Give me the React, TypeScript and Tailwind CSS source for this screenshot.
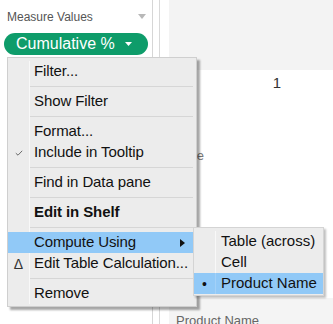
import React from 'react';
import clsx from 'clsx';

type Item = { label: string; icon?: 'check' | 'delta'; bold?: boolean; active?: boolean; sub?: boolean };

// groups are split by separators
const groups: Item[][] = [
  [{ label: 'Filter...' }],
  [{ label: 'Show Filter' }],
  [{ label: 'Format...' }, { label: 'Include in Tooltip', icon: 'check' }],
  [{ label: 'Find in Data pane' }],
  [{ label: 'Edit in Shelf', bold: true }],
  [{ label: 'Compute Using', active: true, sub: true }, { label: 'Edit Table Calculation...', icon: 'delta' }],
  [{ label: 'Remove' }],
];

const subItems = [
  { label: 'Table (across)', selected: false },
  { label: 'Cell', selected: false },
  { label: 'Product Name', selected: true },
];

const CheckIcon = () => (
  <svg width="8" height="6" viewBox="0 0 8 6" fill="none">
    <path d="M0.8 3.2 L3 5.2 L7.2 0.8" stroke="#6b6b6b" strokeWidth="1" />
  </svg>
);

const MenuRow = ({ item }: { item: Item }) => (
  <div className={clsx('flex h-[21px] items-center', item.active && 'bg-[#91c9f7]')}>
    <span
      className={clsx(
        'flex h-full w-[22px] shrink-0 items-center justify-center border-r',
        item.active ? 'border-[#91c9f7]' : 'border-[#f8f8f8]'
      )}
    >
      {item.icon === 'check' && <CheckIcon />}
      {item.icon === 'delta' && <span className="text-[14px] leading-none text-[#333]">Δ</span>}
    </span>
    <span className={clsx('pl-[4px] whitespace-nowrap tracking-[-0.1px]', item.bold && 'font-bold')}>
      {item.label}
    </span>
    {item.sub && (
      <svg className="ml-auto mr-[11px]" width="5" height="8" viewBox="0 0 5 8">
        <path d="M0 0 L5 4 L0 8 Z" fill="#111" />
      </svg>
    )}
  </div>
);

const Separator = () => (
  <div className="flex h-[9px]">
    <span className="w-[22px] shrink-0 border-r border-[#f8f8f8]" />
    <div className="flex flex-1 items-center pr-[3px]">
      <div className="h-px w-full bg-[#d6d6d6]" />
    </div>
  </div>
);

export default function App() {
  return (
    <div
      className="relative flex h-[324px] w-[333px] overflow-hidden bg-white"
      style={{ fontFamily: '"Liberation Sans", Arial, sans-serif' }}
    >
      {/* marks shelf */}
      <div className="w-[153px] shrink-0 border-r border-[#d6d6d6]">
        <div className="flex h-[33px] items-center justify-between pl-[7px] pr-[6px]">
          <span className="text-[12px] text-[#555]">Measure Values</span>
          <svg width="8" height="5" viewBox="0 0 8 5">
            <path d="M0 0 L8 0 L4 5 Z" fill="#b8b8b8" />
          </svg>
        </div>
        <div className="ml-[4px] flex h-[22px] w-[144px] items-center rounded-full bg-[#0e9c6a] pl-[12px] pr-[16px] text-[16px] text-white">
          <span>Cumulative %</span>
          <svg className="ml-auto" width="7" height="4" viewBox="0 0 7 4">
            <path d="M0 0 L7 0 L3.5 4 Z" fill="#fff" />
          </svg>
        </div>
      </div>
      <div className="w-[6px] shrink-0" />
      <div className="w-px shrink-0 bg-[#d9d9d9]" />
      <div className="w-[9px] shrink-0" />

      {/* view */}
      <div className="flex flex-1 flex-col">
        <div className="h-[70px] bg-[#f3f3f3]" />
        <div className="flex h-[26px] items-center justify-end pr-[52px] text-[15px] text-[#333]">1</div>
        <div className="mt-[48px] flex h-[24px] w-[35px] items-center justify-end whitespace-nowrap text-[13px] text-[#777]">
          Measure
        </div>
        <div className="mt-auto h-[26px] bg-[#f4f4f4] pl-[7px] pt-[16px] text-[13px] leading-none text-[#666]">
          Product Name
        </div>
      </div>

      {/* context menu */}
      <div className="absolute left-[7px] top-[57px] w-[190px] border border-[#cfcfcf] bg-[#ececec] pb-[2px] pt-[3px] text-[15px] text-[#111] shadow-[3px_3px_2px_rgba(0,0,0,0.35)]">
        {groups.map((group, gi) => (
          <React.Fragment key={gi}>
            {gi > 0 && <Separator />}
            {group.map((item) => (
              <MenuRow key={item.label} item={item} />
            ))}
          </React.Fragment>
        ))}
      </div>

      {/* compute using submenu */}
      <div className="absolute left-[193px] top-[227px] w-[131px] border border-[#d4d4d4] bg-[#ececec] pb-px pt-[3px] text-[15px] text-[#111] shadow-[2px_2px_2px_rgba(0,0,0,0.25)]">
        {subItems.map((s) => (
          <div key={s.label} className={clsx('flex h-[21px] items-center', s.selected && 'bg-[#91c9f7]')}>
            <span
              className={clsx(
                'flex h-full w-[22px] shrink-0 items-center justify-center border-r',
                s.selected ? 'border-[#a3d1f8]' : 'border-[#f8f8f8]'
              )}
            >
              {s.selected && <span className="text-[14px] leading-none">•</span>}
            </span>
            <span className="pl-[5px] whitespace-nowrap">{s.label}</span>
          </div>
        ))}
      </div>
    </div>
  );
}
